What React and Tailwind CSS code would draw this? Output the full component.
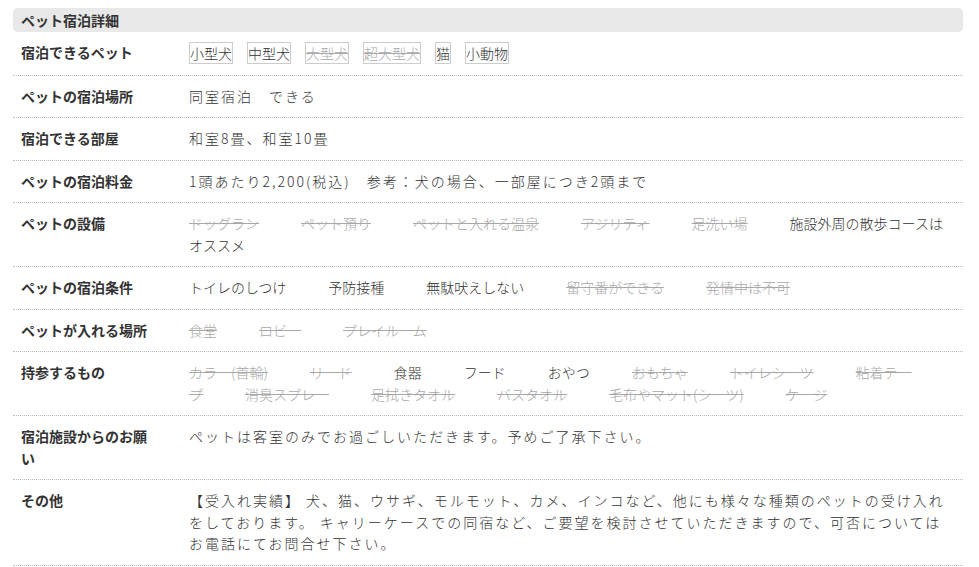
import React from 'react';

const font = { fontFamily: '"Noto Sans CJK JP", "Noto Sans", sans-serif' };

const Tag = ({ children, off }) => (
  <span
    className={`inline-block border border-[#cccccc] leading-[20px] mr-[14px] ${
      off ? 'text-[#aaaaaa] line-through' : 'text-[#333333]'
    }`}
  >
    {children}
  </span>
);

const Item = ({ children, off }) => (
  <span className={`mr-[42px] ${off ? 'text-[#a8a8a8] line-through' : 'text-[#333333]'}`}>
    {children}
  </span>
);

const Row = ({ label, children, spaced }) => (
  <div className="flex border-b border-dotted border-[#bbbbbb]">
    <div className="w-[176px] shrink-0 pl-2 pr-[34px] py-[10px] font-bold text-[#333333]">
      {label}
    </div>
    <div className={`flex-1 pr-[9px] py-[10px] font-light text-[#333333] ${spaced ? 'tracking-[2px]' : ''}`}>
      {children}
    </div>
  </div>
);

export default function App() {
  return (
    <div className="bg-white w-[979px] h-[567px] overflow-hidden pt-2 pl-[13px]" style={font}>
      <div className="w-[950px] text-[14px] leading-[21.5px]">
        <div className="h-6 bg-[#e8e8e8] rounded-[5px] pl-2 font-bold text-[#333333] leading-6">
          ペット宿泊詳細
        </div>

        <Row label="宿泊できるペット">
          <Tag>小型犬</Tag>
          <Tag>中型犬</Tag>
          <Tag off>大型犬</Tag>
          <Tag off>超大型犬</Tag>
          <Tag>猫</Tag>
          <Tag>小動物</Tag>
        </Row>

        <Row label="ペットの宿泊場所" spaced>
          同室宿泊　できる
        </Row>

        <Row label="宿泊できる部屋" spaced>
          和室8畳、和室10畳
        </Row>

        <Row label="ペットの宿泊料金" spaced>
          1頭あたり2,200(税込)　参考：犬の場合、一部屋につき2頭まで
        </Row>

        <Row label="ペットの設備">
          <Item off>ドッグラン</Item>
          <Item off>ペット預り</Item>
          <Item off>ペットと入れる温泉</Item>
          <Item off>アジリティ</Item>
          <Item off>足洗い場</Item>
          <Item>施設外周の散歩コースはオススメ</Item>
        </Row>

        <Row label="ペットの宿泊条件">
          <Item>トイレのしつけ</Item>
          <Item>予防接種</Item>
          <Item>無駄吠えしない</Item>
          <Item off>留守番ができる</Item>
          <Item off>発情中は不可</Item>
        </Row>

        <Row label="ペットが入れる場所">
          <Item off>食堂</Item>
          <Item off>ロビー</Item>
          <Item off>プレイルーム</Item>
        </Row>

        <Row label="持参するもの">
          <Item off>カラー(首輪)</Item>
          <Item off>リード</Item>
          <Item>食器</Item>
          <Item>フード</Item>
          <Item>おやつ</Item>
          <Item off>おもちゃ</Item>
          <Item off>トイレシーツ</Item>
          <Item off>粘着テープ</Item>
          <Item off>消臭スプレー</Item>
          <Item off>足拭きタオル</Item>
          <Item off>バスタオル</Item>
          <Item off>毛布やマット(シーツ)</Item>
          <Item off>ケージ</Item>
        </Row>

        <Row label="宿泊施設からのお願い" spaced>
          ペットは客室のみでお過ごしいただきます。予めご了承下さい。
        </Row>

        <Row label="その他" spaced>
          【受入れ実績】 犬、猫、ウサギ、モルモット、カメ、インコなど、他にも様々な種類のペットの受け入れをしております。 キャリーケースでの同宿など、ご要望を検討させていただきますので、可否についてはお電話にてお問合せ下さい。
        </Row>
      </div>
    </div>
  );
}
